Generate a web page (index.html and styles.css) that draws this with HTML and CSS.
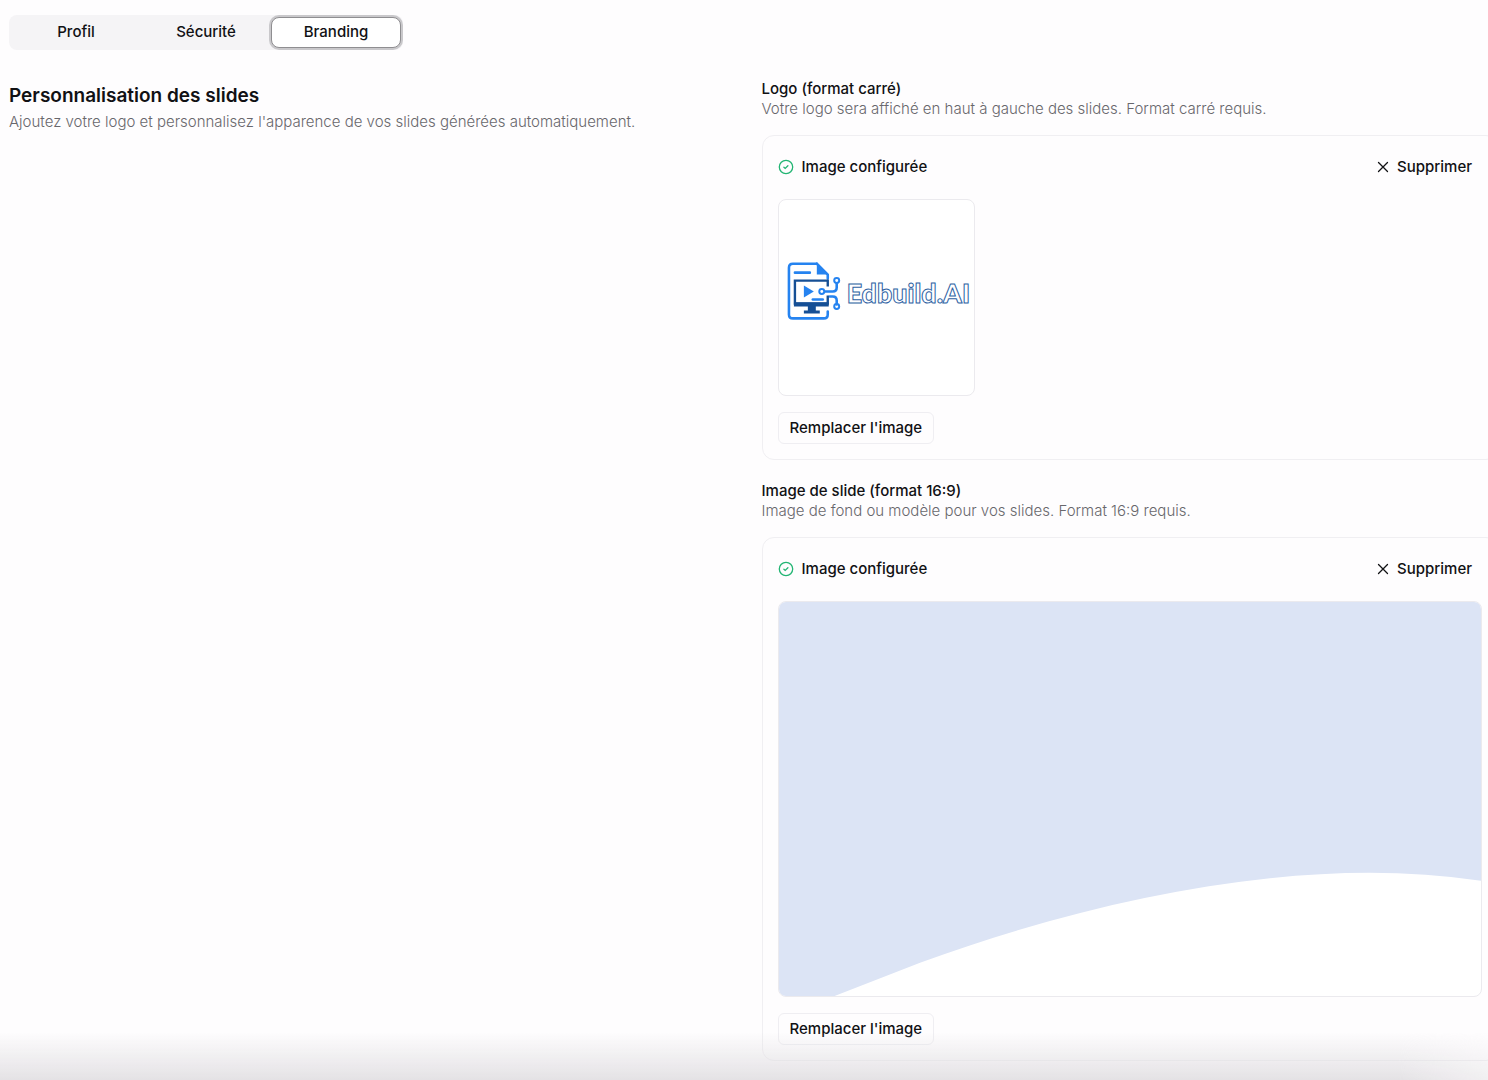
FILE: index.html
```html
<!DOCTYPE html>
<html lang="fr">
<head>
  <meta charset="UTF-8" />
  <meta name="viewport" content="width=device-width, initial-scale=1.0"/>
  <title>Branding</title>
  <link rel="stylesheet" href="styles.css">
</head>
<body>

  <main class="settings">
    <div class="tabs" role="tablist">
      <button class="tab" type="button" role="tab">Profil</button>
      <button class="tab" type="button" role="tab">Sécurité</button>
      <button class="tab active" type="button" role="tab" aria-selected="true">Branding</button>
    </div>

    <div class="columns">
      <section class="intro">
        <h2>Personnalisation des slides</h2>
        <p class="hint">Ajoutez votre logo et personnalisez l'apparence de vos slides générées automatiquement.</p>
      </section>

      <div class="fields">
        <section class="field">
          <h3>Logo (format carré)</h3>
          <p class="hint">Votre logo sera affiché en haut à gauche des slides. Format carré requis.</p>
          <div class="card">
            <div class="card-header">
              <div class="status">
                <svg class="check" viewBox="0 0 16 16"><circle cx="8" cy="8" r="6.7"/><path d="M5.9 8.2l1.3 1.2 2.7-2.6"/></svg>
                <span>Image configurée</span>
              </div>
              <button class="remove" type="button">
                <svg class="cross" viewBox="0 0 12 12"><path d="M1.5 1.5l9 9M10.5 1.5l-9 9"/></svg>
                Supprimer
              </button>
            </div>
            <div class="preview square">
              <svg class="logo" viewBox="0 0 196 196">
                <!-- document -->
                <g fill="none" stroke="#2583f0" stroke-width="2.6" stroke-linecap="round" stroke-linejoin="round">
                  <path d="M38 64H14q-4 0-4 4v47q0 4 4 4h31q4 0 4-4v-3"/>
                  <path d="M38 64l11 11v4M16 73h15"/>
                  <path d="M34 100h10"/>
                  <path d="M45 92h9q4 0 4-4v-4"/>
                  <path d="M51 97h3q4 0 4 4v4"/>
                  <circle cx="58" cy="81" r="2.5" stroke-width="2"/>
                  <circle cx="58" cy="107" r="2.5" stroke-width="2"/>
                </g>
                <path d="M38 64v11h11z" fill="#2583f0"/>
                <path d="M25 86v12l10-6z" fill="#2583f0"/>
                <!-- screen -->
                <path d="M49 87v-6H16v23h33v-8" fill="none" stroke="#154f95" stroke-width="2.4"/>
                <path d="M15 103h35v4H15zM29 107h8v4h4v3H25v-3h4z" fill="#154f95"/>
                <circle cx="43" cy="92" r="2.5" fill="#fff" stroke="#2583f0" stroke-width="2"/>
                <text class="logo-text" x="68" y="104">Edbuild.AI</text>
              </svg>
            </div>
            <button class="replace" type="button">Remplacer l'image</button>
          </div>
        </section>

        <section class="field">
          <h3>Image de slide (format 16:9)</h3>
          <p class="hint">Image de fond ou modèle pour vos slides. Format 16:9 requis.</p>
          <div class="card">
            <div class="card-header">
              <div class="status">
                <svg class="check" viewBox="0 0 16 16"><circle cx="8" cy="8" r="6.7"/><path d="M5.9 8.2l1.3 1.2 2.7-2.6"/></svg>
                <span>Image configurée</span>
              </div>
              <button class="remove" type="button">
                <svg class="cross" viewBox="0 0 12 12"><path d="M1.5 1.5l9 9M10.5 1.5l-9 9"/></svg>
                Supprimer
              </button>
            </div>
            <div class="preview wide">
              <svg class="wave" viewBox="0 0 704 396" preserveAspectRatio="none">
                <path d="M0 0H704V280Q648 272 592 272C450 272 290 308 142 362L55 396H0z" fill="#dce4f5"/>
              </svg>
            </div>
            <button class="replace" type="button">Remplacer l'image</button>
          </div>
        </section>
      </div>
    </div>
  </main>

  <div class="fade"></div>

</body>
</html>
```
FILE: styles.css
```css
* {
  box-sizing: border-box;
}

body {
  margin: 0;
  height: 100vh;
  overflow: hidden;
  background: #fefdfe;
  color: #111114;
  font-family: Inter, sans-serif;
  font-size: 15px;
  line-height: 20px;
}

h2, h3, p {
  margin: 0;
}

button {
  border: 0;
  background: none;
  color: inherit;
  font: inherit;
  font-weight: 500;
  cursor: pointer;
}

/* the right column runs a little past the window edge */
.settings {
  margin-right: -10px;
  padding: 15px 0 0 9px;
}

.tabs {
  display: grid;
  grid-template-columns: 1fr 1fr 1fr;
  width: 394px;
  height: 35px;
  padding: 2px;
  border-radius: 8px;
  background: #f5f4f6;
}

.tab {
  padding: 0 0 2px;
  border-radius: 8px;
}

.tab.active {
  background: #fff;
  border: 1px solid #8f8e91;
  box-shadow: 0 0 0 2px #c9c8cb;
}

.columns {
  display: grid;
  grid-template-columns: 1fr 1fr;
  gap: 16px;
  margin-top: 28px;
}

.intro {
  padding-top: 4px;
}

h2 {
  margin-bottom: 2px;
  font-size: 19px;
  line-height: 28px;
  font-weight: 600;
}

h3 {
  font-size: 15px;
  line-height: 21px;
  font-weight: 500;
}

.hint {
  color: #68676c;
  font-weight: 300;
}

.fields {
  display: flex;
  flex-direction: column;
  gap: 20px;
}

.card {
  display: flex;
  flex-direction: column;
  align-items: flex-start;
  gap: 16px;
  margin-top: 16px;
  padding: 15px;
  border: 1px solid #f0eff2;
  border-radius: 12px;
}

.card-header {
  display: flex;
  justify-content: space-between;
  align-items: center;
  width: 100%;
  height: 32px;
}

.status {
  display: flex;
  align-items: center;
  gap: 8px;
  font-weight: 500;
}

.check {
  width: 16px;
  height: 16px;
  fill: none;
  stroke: #22b573;
  stroke-width: 1.3;
  stroke-linecap: round;
}

.remove {
  display: flex;
  align-items: center;
  gap: 8px;
  padding: 0 10px;
}

.cross {
  width: 12px;
  height: 12px;
  fill: none;
  stroke: #111114;
  stroke-width: 1.3;
  stroke-linecap: round;
}

.preview {
  overflow: hidden;
  border: 1px solid #ebeaee;
  border-radius: 8px;
  background: #fff;
}

.preview svg {
  display: block;
  width: 100%;
  height: 100%;
}

.square {
  width: 197px;
  height: 197px;
}

.wide {
  width: 100%;
  aspect-ratio: 16 / 9;
}

.logo-text {
  fill: #fff;
  stroke: #2d62a3;
  stroke-width: 1;
  font-family: Lato, sans-serif;
  font-size: 27px;
  font-weight: 900;
}

.replace {
  height: 32px;
  padding: 0 11px;
  border: 1px solid #efeef2;
  border-radius: 6px;
}

.fade {
  position: fixed;
  left: 0;
  right: 0;
  bottom: 0;
  height: 48px;
  background: linear-gradient(rgba(225, 223, 226, 0), rgba(225, 223, 226, 0.9));
  -webkit-mask-image: linear-gradient(to right, #000 94%, rgba(0, 0, 0, 0.5));
  mask-image: linear-gradient(to right, #000 94%, rgba(0, 0, 0, 0.5));
  pointer-events: none;
}
```
